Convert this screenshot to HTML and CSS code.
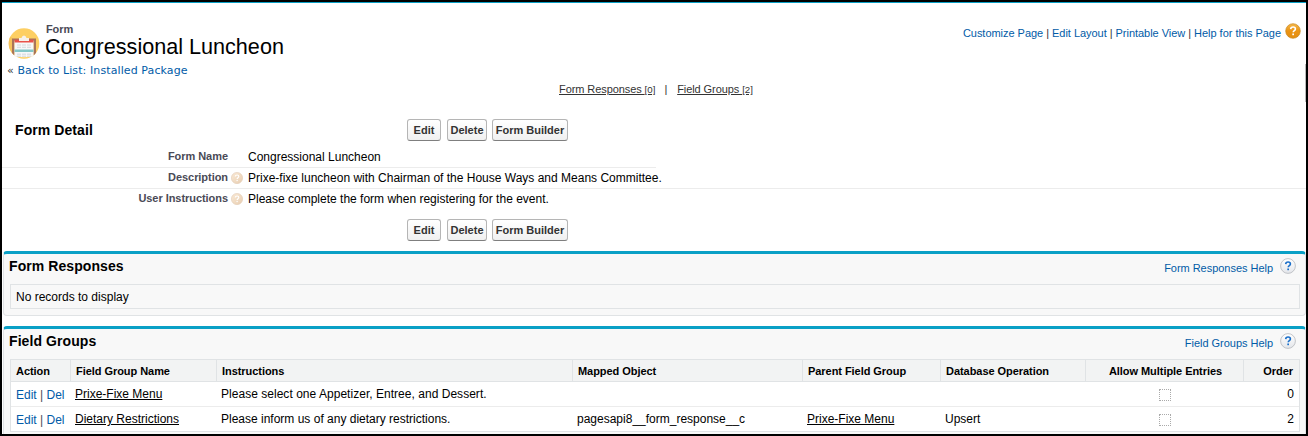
FILE: index.html
```html
<!DOCTYPE html>
<html lang="en">
<head>
<meta charset="utf-8">
<title>Form: Congressional Luncheon</title>
<link rel="stylesheet" href="styles.css">
</head>
<body>
<svg class="defs" width="0" height="0" aria-hidden="true">
  <defs>
    <linearGradient id="gOrange" x1="0" y1="0" x2="0" y2="1"><stop offset="0" stop-color="#f4b84b"/><stop offset=".5" stop-color="#eb9413"/><stop offset="1" stop-color="#e38d10"/></linearGradient>
    <linearGradient id="gPale" x1="0" y1="0" x2="1" y2="1"><stop offset="0" stop-color="#faead6"/><stop offset="1" stop-color="#e8cdb0"/></linearGradient>
    <linearGradient id="gGrey" x1="0" y1="0" x2="0" y2="1"><stop offset="0" stop-color="#ffffff"/><stop offset="1" stop-color="#e4e6ea"/></linearGradient>
    <symbol id="mark" viewBox="0 0 16 16"><path d="M5.700 6.100C5.800 4.600 6.800 4 8.100 4c1.400 0 2.300.8 2.300 1.900 0 1.600-2.200 1.700-2.200 3.400" fill="none" stroke="currentColor" stroke-width="1.600"/><rect x="7.300" y="10.500" width="1.700" height="1.700" fill="currentColor"/></symbol>
  </defs>
</svg>
<main class="page">
  <header class="top">
    <div class="heading">
      <svg class="form-icon" viewBox="0 0 32 32">
        <clipPath id="disc"><circle cx="16" cy="16.500" r="15.300"/></clipPath>
        <g clip-path="url(#disc)">
          <rect width="32" height="32" fill="#fdcf63"/>
          <path d="M0 7 L5 12 V32 H0Z" fill="#f6c25a"/>
          <path d="M4 11.500h24v17h-2.500V14H6.500v14.500H4z" fill="#a9745a"/>
        </g>
        <path d="M6.500 13.500h19v16q-9.500 1.500-19 0z" fill="#f7f8f9"/>
        <path d="M6.500 12.700h19v2.800h-19z" fill="#e9524a"/>
        <path d="M11 14v-3h2.500q.5-2.500 2.500-2.500t2.500 2.500H21v3z" fill="#f6f1ea"/>
        <path d="M6.500 22.500h19V25h-19z" fill="#84c7c7"/>
        <path d="M9 18h14M9 20.300h14M9 27.200h14M9 29.200h14" stroke="#ccd1d6" stroke-width=".8" stroke-dasharray="4 1"/>
      </svg>
      <div class="titles">
        <div class="kind">Form</div>
        <h1>Congressional Luncheon</h1>
      </div>
    </div>
    <nav class="page-links">
      <a>Customize Page</a><i>|</i><a>Edit Layout</a><i>|</i><a>Printable View</a><i>|</i><a>Help for this Page</a>
      <svg class="help orange" viewBox="0 0 16 16"><circle cx="8" cy="8" r="7.300" fill="url(#gOrange)" stroke="#c98a25" stroke-width=".7"/><use href="#mark"/></svg>
    </nav>
  </header>
  <div class="back">« <a>Back to List: Installed Package</a></div>
  <nav class="related">
    <a>Form Responses <small>[0]</small></a><i>|</i><a>Field Groups <small>[2]</small></a>
  </nav>

  <section class="detail">
    <div class="bar">
      <h2>Form Detail</h2>
      <div class="buttons"><button class="edit">Edit</button><button class="delete">Delete</button><button class="builder">Form Builder</button></div>
    </div>
    <div class="field half"><span class="label">Form Name</span><span class="tip"></span><span class="value">Congressional Luncheon</span></div>
    <div class="field"><span class="label">Description</span><span class="tip"><svg viewBox="0 0 16 16"><circle cx="8" cy="8" r="7.500" fill="url(#gPale)" stroke="#e2cbb5" stroke-width=".8"/><use href="#mark"/></svg></span><span class="value">Prixe-fixe luncheon with Chairman of the House Ways and Means Committee.</span></div>
    <div class="field last"><span class="label">User Instructions</span><span class="tip"><svg viewBox="0 0 16 16"><circle cx="8" cy="8" r="7.500" fill="url(#gPale)" stroke="#e2cbb5" stroke-width=".8"/><use href="#mark"/></svg></span><span class="value">Please complete the form when registering for the event.</span></div>
    <div class="bar bottom">
      <div class="buttons"><button class="edit">Edit</button><button class="delete">Delete</button><button class="builder">Form Builder</button></div>
    </div>
  </section>

  <section class="panel responses">
    <div class="panel-head"><h2>Form Responses</h2><div class="panel-help"><a>Form Responses Help</a><svg class="help grey" viewBox="0 0 16 16"><circle cx="8" cy="8" r="7.400" fill="url(#gGrey)" stroke="#b5b8bd" stroke-width=".8"/><use href="#mark"/></svg></div></div>
    <div class="empty">No records to display</div>
  </section>

  <section class="panel groups">
    <div class="panel-head"><h2>Field Groups</h2><div class="panel-help"><a>Field Groups Help</a><svg class="help grey" viewBox="0 0 16 16"><circle cx="8" cy="8" r="7.400" fill="url(#gGrey)" stroke="#b5b8bd" stroke-width=".8"/><use href="#mark"/></svg></div></div>
    <div class="grid">
      <div class="row head"><span>Action</span><span>Field Group Name</span><span>Instructions</span><span>Mapped Object</span><span>Parent Field Group</span><span>Database Operation</span><span class="center">Allow Multiple Entries</span><span class="right">Order</span></div>
      <div class="row"><span class="action"><a>Edit</a> | <a>Del</a></span><span><u>Prixe-Fixe Menu</u></span><span class="wide">Please select one Appetizer, Entree, and Dessert.</span><span></span><span></span><span></span><span class="center"><b class="check"></b></span><span class="right">0</span></div>
      <div class="row"><span class="action"><a>Edit</a> | <a>Del</a></span><span><u>Dietary Restrictions</u></span><span>Please inform us of any dietary restrictions.</span><span>pagesapi8__form_response__c</span><span><u>Prixe-Fixe Menu</u></span><span>Upsert</span><span class="center"><b class="check"></b></span><span class="right">2</span></div>
    </div>
  </section>
  <div class="side-tab"></div>
</main>
</body>
</html>
```

FILE: styles.css
```css
* { box-sizing: border-box; }
body { margin: 0; font-family: "Liberation Sans", Arial, sans-serif; font-size: 12px; color: #000; background: #fff; }
.defs { position: absolute; }
h1, h2 { margin: 0; }
a { color: #015ba7; }
i { font-style: normal; }
.page { position: relative; width: 1308px; height: 436px; overflow: hidden; border: 2px solid #000; background: #fff; }
.top { display: flex; justify-content: space-between; height: 60px; border-top: 1px solid #0aa0c6; }
.heading { display: flex; padding: 24px 0 0 6px; }
.form-icon { width: 32px; height: 32px; }
.titles { padding-left: 6px; margin-top: -4px; }
.kind { font-size: 11px; font-weight: bold; line-height: 13px; letter-spacing: -.1px; color: #4a4a56; }
h1 { font-size: 21.600px; font-weight: normal; line-height: 21px; white-space: nowrap; margin-left: -1px; }
.page-links { display: flex; align-items: center; height: 20px; margin: 20px 5px 0 0; font-size: 11px; letter-spacing: -.03px; white-space: nowrap; }
.page-links i { margin: 0 3px; color: #333; }
.help { width: 16px; height: 16px; flex: none; }
.orange { color: #fff; margin: -5px 0 0 4px; }
.grey { color: #1b6fc9; }
.back { height: 17px; padding-left: 5px; font: 11px/17px "DejaVu Sans", sans-serif; letter-spacing: .1px; color: #333; }
.related { display: flex; height: 20px; line-height: 20px; padding-left: 557px; font-size: 11px; letter-spacing: -.08px; }
.related a { color: #333; text-decoration: underline; white-space: nowrap; }
.related i { margin: 0 10px 0 9px; color: #333; }
.related small { font-size: 9.700px; letter-spacing: 0; }
.detail { height: 152px; padding-top: 2px; }
.bar { display: flex; height: 46px; padding-top: 18px; }
.bar h2 { width: 405px; padding-left: 13px; font-size: 14px; line-height: 22px; letter-spacing: .08px; }
.bar.bottom { height: 40px; padding: 9px 0 0 405px; }
.buttons { display: flex; }
button { height: 22px; padding: 0; border: 1px solid #b5b5b5; border-bottom-color: #7f7f7f; border-radius: 3px; background: linear-gradient(#fff, #f0f0f0); color: #333; font: bold 11px/20px "Liberation Sans", sans-serif; white-space: nowrap; }
.edit { width: 34px; margin-right: 6px; }
.delete { width: 40px; margin-right: 5px; }
.builder { width: 76px; }
.field { display: flex; height: 21px; border-bottom: 1px solid #ececec; line-height: 20px; white-space: nowrap; }
.field.half { width: 654px; }
.field.last { border-bottom-color: transparent; }
.label { width: 226px; text-align: right; font-size: 11px; line-height: 18px; letter-spacing: -.05px; font-weight: bold; color: #4a4a56; }
.tip { width: 20px; padding: 4px 0 0 3px; color: #fff; line-height: 0; }
.tip svg { width: 12px; height: 12px; }
.panel { margin-left: 1px; padding: 0 5px; border: 1px solid #e0e3e5; border-top: 3px solid #0aa0c6; border-radius: 4px; background: #f8f8f8; }
.responses { height: 65px; margin-bottom: 10px; }
.groups { height: 112px; }
.panel-head { display: flex; justify-content: space-between; height: 30px; }
.panel h2 { font-size: 14px; line-height: 24px; letter-spacing: .08px; }
.panel-help { display: flex; font-size: 11px; line-height: 28px; letter-spacing: -.03px; padding-right: 4px; }
.panel-help .help { margin: 4px 0 0 7px; }
.empty { margin-left: 1px; width: 1290px; height: 25px; border: 1px solid #e0e3e5; padding-left: 5px; line-height: 24px; }
.grid { margin-left: 1px; width: 1290px; border: 1px solid #e0e3e5; background: #fff; }
.row { display: grid; grid-template-columns: 59px 146px 356px 230px 138px 145px 158px 56px; height: 25px; line-height: 24px; white-space: nowrap; border-bottom: 1px solid #ececec; }
.row > span { padding: 0 5px; }
.row:last-child { border-bottom: 0; height: 24px; }
.row.head { height: 22px; line-height: 22px; border-bottom-color: #e0e3e5; background: #f2f3f3; font-size: 11px; font-weight: bold; letter-spacing: -.05px; }
.head > span { border-left: 1px solid #e0e3e5; }
.head > span:first-child { border-left-color: transparent; padding-left: 4px; }
.row .wide { letter-spacing: .03px; }
.row .center { text-align: center; padding: 0 4px 0 6px; }
.row .right { text-align: right; padding-right: 5px; }
.head .right { padding-right: 6px; }
.row .action { color: #4a4a56; line-height: 26px; }
.check { display: block; width: 12px; height: 12px; margin: 7px auto 0; border: 1px dotted #aaa; }
.side-tab { position: absolute; right: 0; top: 62px; width: 1px; height: 38px; background: #bbb; }
```
